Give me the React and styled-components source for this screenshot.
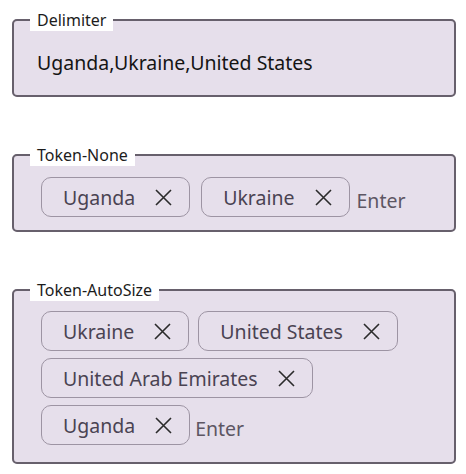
import React from 'react';
import styled, { createGlobalStyle } from 'styled-components';

const GlobalStyle = createGlobalStyle`
    body {
        margin: 0;
        background: #ffffff;
        font-family: "Noto Sans", "Open Sans", sans-serif;
    }
`;

const Page = styled.div`
    width: 466px;
    padding: 9px 10px 0 12px;
    box-sizing: border-box;
    display: flex;
    flex-direction: column;
    gap: 47px;
`;

const Group = styled.fieldset`
    margin: 0;
    padding: 0;
    min-width: 0;
    border: 2px solid #67606c;
    border-radius: 5px;
    background: #e6dfeb;
`;

const Label = styled.legend`
    margin-left: 16px;
    padding: 0 7px;
    background: #ffffff;
    color: #1c1c1c;
    font-size: 16px;
    line-height: 22px;
`;

const Value = styled.div`
    padding: 18px 22px 18px 23px;
    color: #141414;
    font-size: 19.5px;
    line-height: 28px;
`;

const TokenList = styled.div`
    display: flex;
    flex-wrap: wrap;
    align-items: center;
    gap: 7px ${(p) => p.$gap}px;
    padding: ${(p) => p.$top}px 12px ${(p) => p.$bottom}px 27px;
`;

const Chip = styled.div`
    display: flex;
    align-items: center;
    gap: 20px;
    height: 40px;
    box-sizing: border-box;
    padding: 0 17px 0 21px;
    border: 1px solid #9d94a3;
    border-radius: 10px;
    color: #4a4352;
    font-size: 19.5px;
    white-space: nowrap;
`;

const Remove = styled.button`
    display: flex;
    padding: 0;
    border: none;
    background: none;
    color: #2b2b2b;
    cursor: pointer;
`;

const Entry = styled.input`
    flex: 1;
    min-width: 60px;
    margin-left: -4px;
    padding: 6px 0 0;
    border: none;
    outline: none;
    background: transparent;
    font-family: inherit;
    font-size: 19.5px;
    color: #222;
    &::placeholder {
        color: #5d5663;
    }
`;

function CloseIcon() {
    return (
        <svg width="17" height="17" viewBox="0 0 17 17">
            <path d="M1 1 L16 16 M16 1 L1 16" stroke="currentColor" strokeWidth="1.6" fill="none" />
        </svg>
    );
}

function Tokens({ label, items, gap, top, bottom }) {
    return (
        <Group>
            <Label>{label}</Label>
            <TokenList $gap={gap} $top={top} $bottom={bottom}>
                {items.map((item) => (
                    <Chip key={item}>
                        {item}
                        <Remove type="button" aria-label={'Remove ' + item}>
                            <CloseIcon />
                        </Remove>
                    </Chip>
                ))}
                <Entry placeholder="Enter" />
            </TokenList>
        </Group>
    );
}

export default function App() {
    return (
        <>
            <GlobalStyle />
            <Page>
                <Group>
                    <Label>Delimiter</Label>
                    <Value>Uganda,Ukraine,United States</Value>
                </Group>
                <Tokens label="Token-None" items={['Uganda', 'Ukraine']} gap={11} top={11} bottom={13} />
                <Tokens
                    label="Token-AutoSize"
                    items={['Ukraine', 'United States', 'United Arab Emirates', 'Uganda']}
                    gap={9}
                    top={10}
                    bottom={17}
                />
            </Page>
        </>
    );
}
